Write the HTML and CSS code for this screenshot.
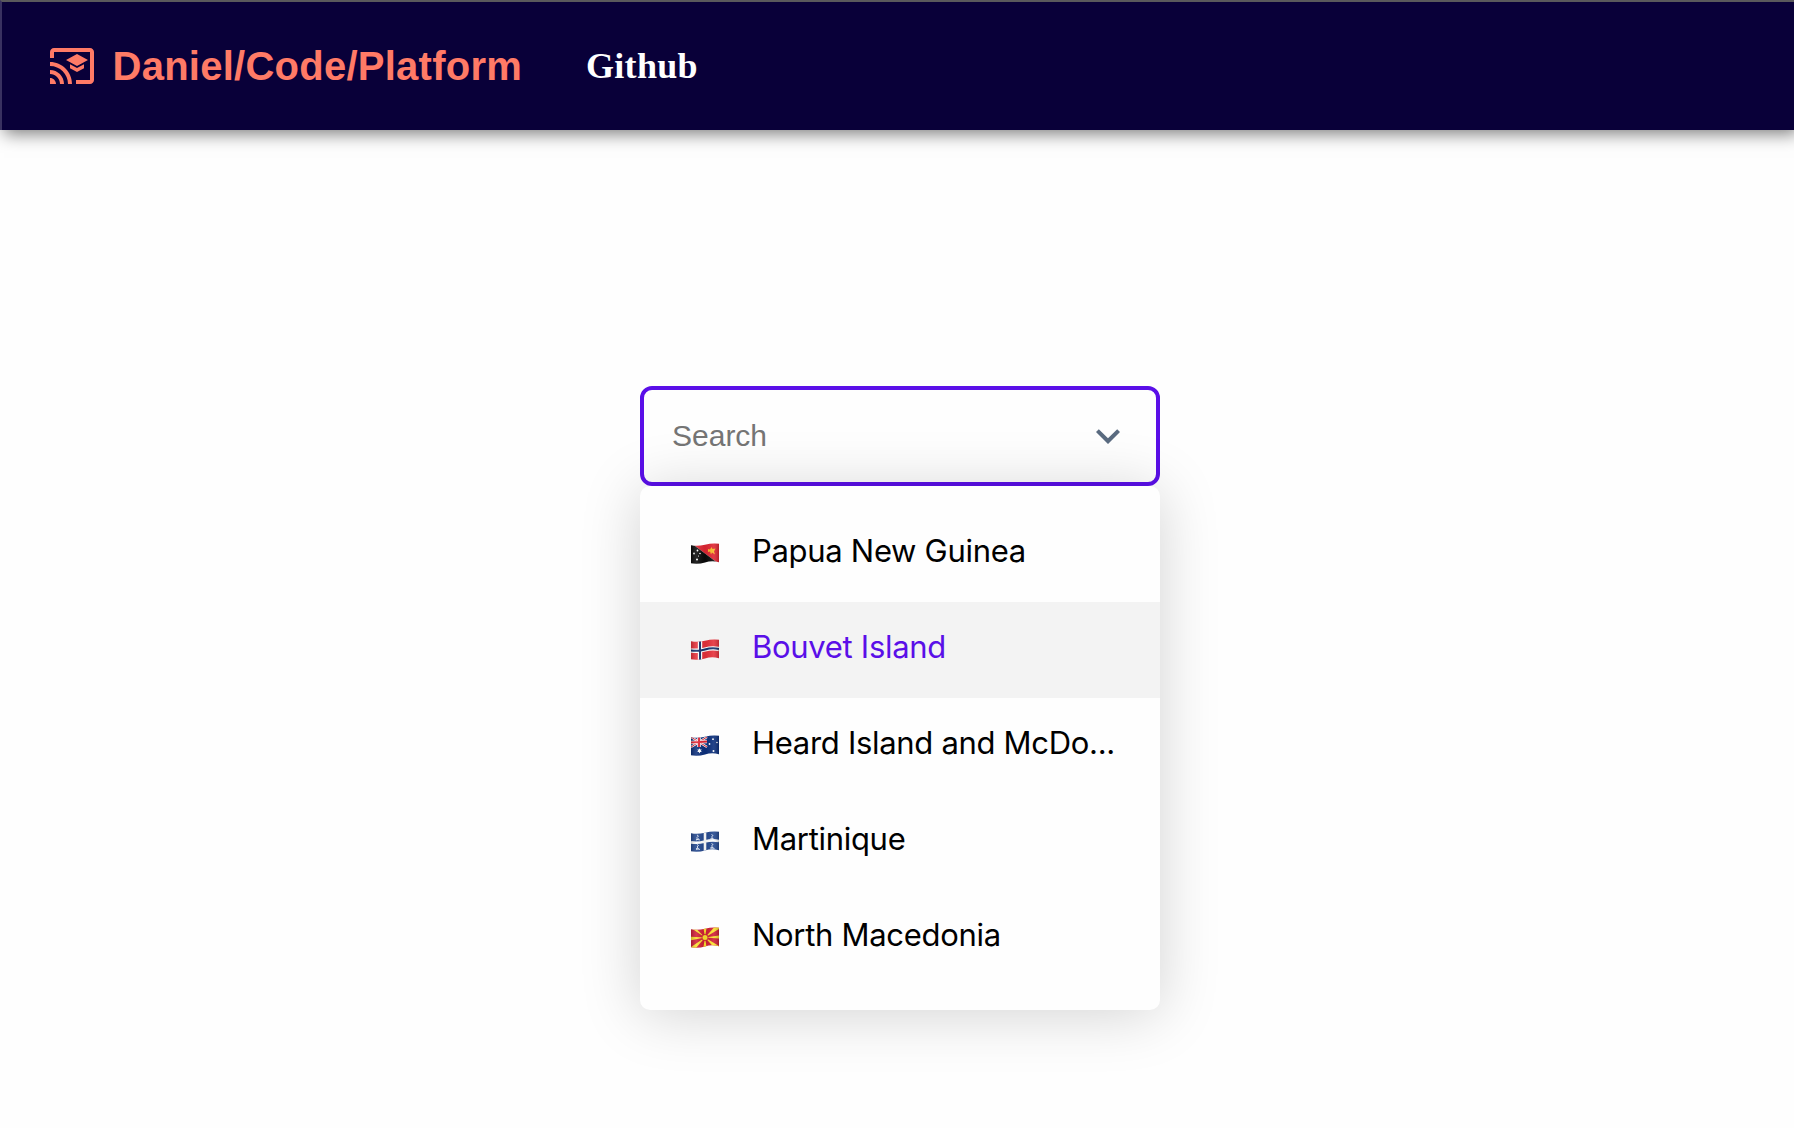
FILE: index.html
```html
<!DOCTYPE html>
<html lang="en">
<head>
<meta charset="utf-8">
<title>Daniel/Code/Platform</title>
<link rel="stylesheet" href="styles.css">
</head>
<body>
<svg class="defs" width="0" height="0" aria-hidden="true">
  <defs>
    <clipPath id="wave"><path d="M0 2.2Q6.500 3.700 14 1.700T28 .8V19.200Q21 17.300 14 19.400T0 20.200Z"/></clipPath>
    <linearGradient id="sheen">
      <stop offset="0" stop-color="#000" stop-opacity=".2"/>
      <stop offset=".2" stop-color="#fff" stop-opacity=".12"/>
      <stop offset=".5" stop-color="#000" stop-opacity=".06"/>
      <stop offset=".8" stop-color="#fff" stop-opacity=".1"/>
      <stop offset="1" stop-color="#000" stop-opacity=".2"/>
    </linearGradient>
  </defs>
</svg>
<header class="header">
  <a class="brand">
    <svg class="brand-icon" viewBox="0 0 24 24" fill="currentColor"><path d="M21 3H3c-1.100 0-2 .9-2 2v3h2V5h18v14h-7v2h7c1.100 0 2-.9 2-2V5c0-1.100-.9-2-2-2zM1 18v3h3c0-1.660-1.340-3-3-3zm0-4v2c2.760 0 5 2.240 5 5h2c0-3.870-3.130-7-7-7zm0-4v2c4.970 0 9 4.030 9 9h2c0-6.080-4.930-11-11-11zm10 1.090v2L14.500 15l3.500-1.910v-2L14.500 13 11 11.090zM14.500 6L9 9l5.500 3L20 9l-5.500-3z"/></svg>
    <span class="brand-name">Daniel/Code/Platform</span>
  </a>
  <a class="nav-link">Github</a>
</header>
<main class="main">
  <div class="select">
    <div class="control">
      <input class="search" type="text" placeholder="Search">
      <svg class="chevron" viewBox="0 0 24 24" fill="currentColor"><path d="M16.590 8.590 12 13.170 7.410 8.590 6 10l6 6 6-6z"/></svg>
    </div>
    <ul class="menu">
      <li class="option">
        <svg class="flag" viewBox="0 0 28 21"><g clip-path="url(#wave)"><path fill="#e02632" d="M0 0h28v21z"/><path fill="#090909" d="M0 0v21h28z"/><path fill="#f8b928" d="m17 6 2 .5 1.500-2.500 1 2 3-.5-1.500 3 1 3-3-2-1 2-1-3-2 .5z"/><g fill="#fff"><circle cx="6.500" cy="7.500" r=".9"/><circle cx="3" cy="10.500" r=".9"/><circle cx="9" cy="10.500" r=".8"/><circle cx="7.500" cy="13" r=".6"/><circle cx="6" cy="16.500" r="1"/></g><path fill="url(#sheen)" d="M0 0h28v21H0z"/></g></svg>
        <span class="label">Papua New Guinea</span>
      </li>
      <li class="option is-active">
        <svg class="flag" viewBox="0 0 28 21"><g clip-path="url(#wave)"><path fill="#e6303a" d="M0 0h28v21H0z"/><path fill="none" stroke="#fff" stroke-width="4.400" d="M9 0v21M0 11.400Q7 12.500 14 10.500T28 10"/><path fill="none" stroke="#13306b" stroke-width="2" d="M9 0v21M0 11.400Q7 12.500 14 10.500T28 10"/><path fill="url(#sheen)" d="M0 0h28v21H0z"/></g></svg>
        <span class="label">Bouvet Island</span>
      </li>
      <li class="option">
        <svg class="flag" viewBox="0 0 28 21"><g clip-path="url(#wave)"><path fill="#0b2f7c" d="M0 0h28v21H0z"/><path stroke="#fff" stroke-width="2.200" d="m0 2 16 10M0 12 16 2"/><path stroke="#e32636" stroke-width="1" d="m0 2 16 10M0 12 16 2"/><path stroke="#fff" stroke-width="3.600" d="M8 1v11M0 7.500l16-1"/><path stroke="#e32636" stroke-width="2.200" d="M8 1v11M0 7.500l16-1"/><g fill="#fff"><path d="m8.500 13.200.7 1.400 1.600-.2-1 1.300 1 1.300-1.600-.1-.7 1.500-.7-1.500-1.600.1 1-1.300-1-1.300 1.600.2z"/><circle cx="22" cy="4.200" r=".9"/><circle cx="18.500" cy="9" r=".9"/><circle cx="26" cy="7.500" r=".8"/><circle cx="22.500" cy="16" r="1"/></g><path fill="url(#sheen)" d="M0 0h28v21H0z"/></g></svg>
        <span class="label">Heard Island and McDo...</span>
      </li>
      <li class="option">
        <svg class="flag" viewBox="0 0 28 21"><g clip-path="url(#wave)"><path fill="#24488f" d="M0 0h28v21H0z"/><path fill="none" stroke="#fff" stroke-width="2.600" d="M14 0v21M0 11.400Q7 12.500 14 10.500T28 10"/><g fill="none" stroke="#e4eaf4" stroke-width=".9"><path d="m6 4 1.500 1L6 6.500 7.500 8 5 9m0-1 4 1M20.500 3.500l1.500 1L20.500 6 22 7.500l-2.500 1m0-1 4 1M6 13.500l1.500 1L6 16l1.500 1.500-2.500 1m0-1 4 1M20.500 12.500l1.500 1-1.500 1.500 1.500 1.500-2.500 1m0-1 4 1"/></g><path fill="url(#sheen)" d="M0 0h28v21H0z"/></g></svg>
        <span class="label">Martinique</span>
      </li>
      <li class="option">
        <svg class="flag" viewBox="0 0 28 21"><g clip-path="url(#wave)"><path fill="#d01e36" d="M0 0h28v21H0z"/><path fill="#fbe02c" d="M14 10.500 0 1h4.500zM14 10.500 23.500 0H28v2zM14 10.500 0 20v1h5zM14 10.500 23.500 21H28v-2zM14 10.500 12.300 0h3.400zM14 10.500 12.300 21h3.400zM14 10.500 0 9.800v3.400zM14 10.500 28 8.500v3z"/><circle cx="14" cy="10.500" r="3.300" fill="#d01e36"/><circle cx="14" cy="10.500" r="2.500" fill="#fbe02c"/><path fill="url(#sheen)" d="M0 0h28v21H0z"/></g></svg>
        <span class="label">North Macedonia</span>
      </li>
    </ul>
  </div>
</main>
</body>
</html>
```
FILE: styles.css
```css
* { box-sizing: border-box; }

body {
  margin: 0;
  min-height: 1128px;
  background: #fefefe;
  font-family: Inter, sans-serif;
}

.defs { position: absolute; }

.header {
  display: flex;
  align-items: center;
  height: 130px;
  padding: 0 46px;
  border-top: 2px solid #5a595c;
  border-left: 2px solid #393160;
  background: #090039;
  box-shadow: 4px 4px 16px rgba(0, 0, 0, .5);
}

.brand {
  display: flex;
  align-items: center;
  width: 538px;
  color: #ff7a66;
}

.brand-icon { width: 48px; height: 48px; }

.brand-name {
  margin-left: 16.5px;
  font: bold 40px/48px "Liberation Sans", Arial, sans-serif;
  letter-spacing: .25px;
}

.nav-link {
  color: #fff;
  font: bold 36px/44px "Liberation Serif", "Times New Roman", serif;
  letter-spacing: .3px;
}

.main {
  display: flex;
  justify-content: center;
  padding: 256px 0 0 6px;
}

.select { width: 520px; }

.control {
  display: flex;
  align-items: center;
  height: 100px;
  padding: 0 24px 0 28px;
  border: 4px solid #5a0fe8;
  border-radius: 12px;
}

.search {
  flex: 1;
  min-width: 0;
  padding: 0;
  border: 0;
  outline: 0;
  background: none;
  font: 30px/40px "Liberation Sans", Arial, sans-serif;
}

.search::placeholder { color: #757575; }

.chevron { width: 48px; height: 48px; color: #5a6b80; }

.menu {
  position: relative;
  height: 524px;
  margin: 0;
  padding: 20px 0;
  border-radius: 10px;
  background: #fefefe;
  box-shadow: 0 4px 60px rgba(0, 0, 0, .175);
  list-style: none;
}

.option {
  display: flex;
  align-items: center;
  height: 96px;
  padding: 0 40px 2px 51px;
  color: #000;
}

.option.is-active {
  background: #f3f3f3;
  color: #5a0fe8;
}

.flag {
  flex: none;
  width: 28px;
  height: 21px;
}

.label {
  margin-left: 33px;
  padding-bottom: 4px;
  font-size: 31px;
  line-height: 44px;
  letter-spacing: -.3px;
  white-space: nowrap;
}
```
